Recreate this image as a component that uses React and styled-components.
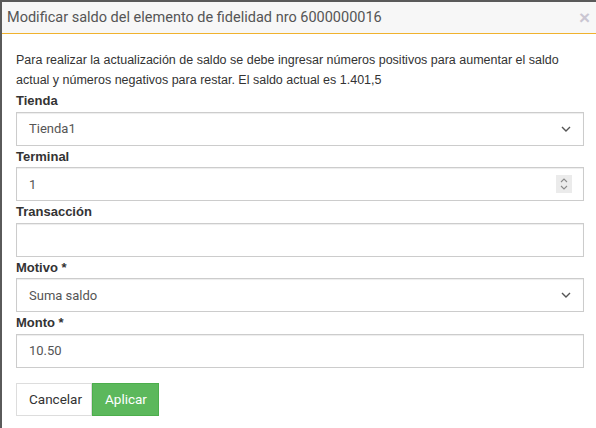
import React from "react";
import styled, { createGlobalStyle } from "styled-components";

const Global = createGlobalStyle`
  html, body { margin: 0; padding: 0; background: #5a5a5a; }
  body { font-family: "Liberation Sans", Arial, sans-serif; }
  * { box-sizing: border-box; }
`;

const Modal = styled.div`
  margin: 2px 0 0 2px;
  width: 594px;
  height: 426px;
  background: #fff;
  display: flex;
  flex-direction: column;
`;

const Header = styled.div`
  height: 32px;
  background: #f7f7f7;
  border-bottom: 1px solid #f0b22e;
  display: flex;
  align-items: center;
  justify-content: space-between;
  padding: 0 6px 0 5px;
`;

const Title = styled.h4`
  margin: 0;
  font-family: Roboto, sans-serif;
  font-weight: 400;
  font-size: 14.5px;
  color: #555;
`;

const Close = styled.span`
  font-family: "Liberation Sans", Arial, sans-serif;
  font-weight: 700;
  font-size: 19px;
  color: #cac6d2;
  line-height: 1;
`;

const Body = styled.div`
  padding: 16px 12px 0 14px;
  display: flex;
  flex-direction: column;
`;

const Intro = styled.p`
  margin: 0;
  font-size: 12.5px;
  line-height: 20px;
  color: #333;
`;

const Label = styled.label`
  display: block;
  font-family: "Liberation Sans", Arial, sans-serif;
  font-weight: 700;
  font-size: 13px;
  line-height: 21.5px;
  color: #333;
`;

const Control = styled.div`
  position: relative;
  height: 34px;
  border: 1px solid #ccc;
  box-shadow: inset 0 1px 1px rgba(0, 0, 0, 0.075);
  background: #fff;
  display: flex;
  align-items: center;
  justify-content: space-between;
  padding: 0 12px 0 12px;
  font-family: Roboto, sans-serif;
  font-size: 13px;
  color: #555;
`;

const Spinner = styled.div`
  width: 16px;
  height: 18px;
  background: #ebebeb;
  display: flex;
  align-items: center;
  justify-content: center;
  margin-right: -1px;
`;

const Actions = styled.div`
  display: flex;
  margin-top: 15px;
`;

const Button = styled.button`
  height: 33px;
  padding: 0 12px;
  font-family: Roboto, sans-serif;
  font-size: 13.5px;
  border: 1px solid ${(p) => (p.$primary ? "#4cae4c" : "#ddd")};
  background: ${(p) => (p.$primary ? "#5cb85c" : "#fff")};
  color: ${(p) => (p.$primary ? "#fff" : "#333")};
  width: ${(p) => p.$w}px;
`;

const Chevron = () => (
  <svg width="10" height="6" viewBox="0 0 10 6">
    <path d="M1 1l4 4 4-4" fill="none" stroke="#555" strokeWidth="1.4" />
  </svg>
);

const SpinIcon = () => (
  <svg width="10" height="14" viewBox="0 0 10 14">
    <path d="M2 5l3-3 3 3M2 9l3 3 3-3" fill="none" stroke="#8a8a8a" strokeWidth="1.1" />
  </svg>
);

const Field = ({ label, value, kind }) => (
  <div>
    <Label>{label}</Label>
    <Control>
      <span>{value}</span>
      {kind === "select" && <Chevron />}
      {kind === "number" && (
        <Spinner>
          <SpinIcon />
        </Spinner>
      )}
    </Control>
  </div>
);

export default function App() {
  return (
    <>
      <Global />
      <Modal>
        <Header>
          <Title>Modificar saldo del elemento de fidelidad nro 6000000016</Title>
          <Close>×</Close>
        </Header>
        <Body>
          <Intro>
            Para realizar la actualización de saldo se debe ingresar números positivos para aumentar el saldo
            actual y números negativos para restar. El saldo actual es 1.401,5
          </Intro>
          <Field label="Tienda" value="Tienda1" kind="select" />
          <Field label="Terminal" value="1" kind="number" />
          <Field label="Transacción" value="" />
          <Field label="Motivo *" value="Suma saldo" kind="select" />
          <Field label="Monto *" value="10.50" />
          <Actions>
            <Button $w={76}>Cancelar</Button>
            <Button $primary $w={67}>Aplicar</Button>
          </Actions>
        </Body>
      </Modal>
    </>
  );
}
